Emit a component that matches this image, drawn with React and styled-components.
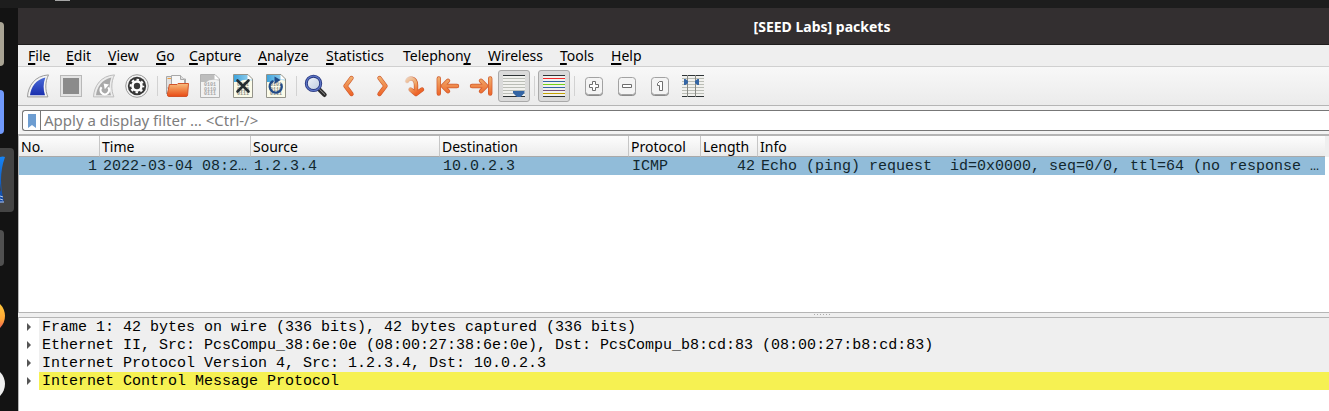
import React from "react";
import styled, { createGlobalStyle } from "styled-components";

const UI = `"Noto Sans", "Open Sans", sans-serif`;
const MONO = `"Liberation Mono", monospace`;

const GlobalStyle = createGlobalStyle`
  *, *::before, *::after { box-sizing: border-box; }
  html, body, #root { height: 100%; }
  body { margin: 0; background: #1d1d1d; font: 14px/20px ${UI}; color: #000; overflow: hidden; }
`;

const Desktop = styled.div`
  display: flex;
  flex-direction: column;
  height: 100%;
`;
const TopPanel = styled.div`
  flex: none;
  height: 8px;
  padding-left: 55px;
  background: #1d1d1d;
`;
const PanelMark = styled.div`
  width: 15px;
  height: 1px;
  background: #a5a5a5;
`;
const Workspace = styled.div`
  flex: 1;
  display: flex;
  min-height: 0;
`;
const Dock = styled.nav`
  flex: none;
  width: 18px;
  padding-top: 2px;
  background: #131313;
  overflow: hidden;
`;
const DockSlot = styled.div`
  display: flex;
  align-items: center;
  height: 68px;
  svg { display: block; }
`;
const Window = styled.main`
  flex: 1;
  min-width: 0;
  display: flex;
  flex-direction: column;
  background: #efefef;
`;
const TitleBar = styled.h1`
  flex: none;
  height: 37px;
  margin: 0;
  padding-left: 297px;
  border-bottom: 1px solid #1f1d1d;
  background: #332f30;
  color: #fff;
  font-size: 14px;
  line-height: 38px;
  font-weight: 700;
  text-align: center;
`;
const MenuBar = styled.nav`
  flex: none;
  display: flex;
  gap: 15px;
  height: 22px;
  padding-left: 10px;
  border-bottom: 1px solid #d0d0d0;
`;
const MenuItem = styled.button`
  width: ${(p) => p.$width}px;
  padding: 0;
  border: 0;
  background: none;
  font: inherit;
  line-height: 21px;
  text-align: left;
  white-space: nowrap;
  color: #000;
  u {
    text-decoration-thickness: 2px;
    text-underline-offset: 2px;
    text-decoration-skip-ink: none;
  }
`;
const ToolBar = styled.div`
  flex: none;
  display: flex;
  align-items: center;
  gap: 1px;
  height: 39px;
  padding-left: 4px;
  border-bottom: 1px solid #b5b5b5;
  background: linear-gradient(#f8f8f8, #ebebeb);
`;
const ToolButton = styled.button`
  display: flex;
  align-items: center;
  justify-content: center;
  width: 32px;
  height: 32px;
  padding: 0;
  border: 1px solid ${(p) => (p.$checked ? "#a9a9a9" : "transparent")};
  border-radius: 3px;
  background: ${(p) => (p.$checked ? "#dadada" : "none")};
`;
const Separator = styled.div`
  width: 6px;
  height: 20px;
  padding-left: 3px;
  &::before {
    content: "";
    display: block;
    width: 1px;
    height: 100%;
    background: #d2d2d2;
  }
`;
const FilterBar = styled.div`
  flex: none;
  display: flex;
  padding: 4px 0 3px 4px;
  background: #f3f3f3;
`;
const FilterField = styled.div`
  flex: 1;
  display: flex;
  height: 21px;
  border: 1px solid #777;
  border-right: 0;
  border-radius: 3px 0 0 3px;
  background: #fff;
`;
const BookmarkButton = styled.button`
  display: flex;
  align-items: center;
  justify-content: center;
  width: 18px;
  padding: 0;
  border: 0;
  border-right: 1px solid #777;
  background: none;
`;
const FilterInput = styled.input`
  flex: 1;
  min-width: 0;
  padding: 0 3px;
  border: 0;
  outline: 0;
  background: none;
  font: 15px/19px ${UI};
  &::placeholder { color: #7d7d7d; opacity: 1; }
`;
const PacketPane = styled.section`
  flex: none;
  height: 179px;
  border: solid #b5b5b5;
  border-width: 2px 0 1px 1px;
  background: linear-gradient(#efefef 21px, #fff 21px);
`;
const PacketTable = styled.table`
  width: calc(100% - 4px);
  table-layout: fixed;
  border-collapse: separate;
  border-spacing: 0;
`;
const Heading = styled.th`
  height: 21px;
  padding: 1px 0 0 2px;
  border-right: ${(p) => (p.$last ? "0" : "1px solid #c6c6c6")};
  border-bottom: 1px solid #a9a9a9;
  background: linear-gradient(#fdfdfd, #ebebeb);
  font-weight: 400;
  line-height: 19px;
  text-align: left;
  white-space: nowrap;
`;
const Cell = styled.td`
  height: 18px;
  padding: 1px 3px 0;
  background: #91bcd9;
  font: 15px/17px ${MONO};
  color: #12272e;
  text-align: ${(p) => (p.$numeric ? "right" : "left")};
  white-space: pre;
  overflow: hidden;
`;
const Splitter = styled.div`
  flex: none;
  display: flex;
  justify-content: center;
  gap: 2px;
  height: 4px;
  padding: 1px 0 0 297px;
`;
const Grip = styled.span`
  width: 1px;
  height: 1px;
  background: #aaa;
`;
const DetailsPane = styled.section`
  flex: 1;
  min-height: 0;
  border: solid #b5b5b5;
  border-width: 1px 0 0 1px;
  background: #fff;
`;
const DetailRow = styled.div`
  display: flex;
  height: 18px;
`;
const Expander = styled.button`
  display: flex;
  align-items: center;
  width: 20px;
  padding: 0 0 0 7px;
  border: 0;
  background: none;
`;
const DetailText = styled.div`
  flex: 1;
  padding: 1px 0 0 3px;
  background: ${(p) => (p.$selected ? "#f6f152" : "#efefef")};
  font: 15px/17px ${MONO};
  white-space: nowrap;
`;

const Icon = ({ children }) => (
  <svg width="24" height="24" viewBox="0 0 24 24" fill="none" aria-hidden="true">
    {children}
  </svg>
);

const FIN_OUTER = "M1.5 22.9C2 12 9 1.6 22.5 .9C19 8 19 16 21.9 22.9Z";
const FIN_INNER = "M4 21.2C5 13 10 5.2 19.4 3.4C17 9.5 17.2 15.5 19 21.2Z";

const StartIcon = () => (
  <Icon>
    <path d={FIN_OUTER} fill="#f4f4f4" stroke="#9a9a9a" />
    <path d={FIN_INNER} fill="url(#finBlue)" />
  </Icon>
);
const StopIcon = () => (
  <Icon>
    <rect x="1.5" y="1.5" width="21" height="21" fill="#e4e4e4" stroke="#b8b8b8" />
    <rect x="4" y="4" width="16" height="16" fill="#8b8b8b" />
  </Icon>
);
const RestartIcon = () => (
  <Icon>
    <path d={FIN_OUTER} fill="#ececec" stroke="#bcbcbc" />
    <path d={FIN_INNER} fill="#a9a9a9" />
    <path d="M9.6 13.2A4.3 4.3 0 1 0 16.2 13.4" stroke="#fff" strokeWidth="2.2" />
    <path d="M11.6 9.4L17 10.6L12.8 15.2Z" fill="#fff" />
  </Icon>
);
const OptionsIcon = () => (
  <Icon>
    <circle cx="12" cy="12" r="11.3" fill="#f4f4f4" stroke="#9b9b9b" />
    <circle cx="12" cy="12" r="9.2" fill="#383838" />
    <circle cx="12" cy="12" r="6.3" stroke="#fff" strokeWidth="2" strokeDasharray="2.5 2.45" strokeDashoffset="1.25" />
    <circle cx="12" cy="12" r="4.5" stroke="#fff" strokeWidth="2.6" />
  </Icon>
);
const OpenIcon = () => (
  <Icon>
    <path d="M1.5 20V2.5H7V5H20.5V14H1.5Z" fill="#e2e2e2" stroke="#a8a8a8" />
    <path d="M2.5 4.5H6" stroke="#f0a040" />
    <path d="M6.5 13V1.5H15.5L19.5 5.5V13Z" fill="#f7f7f7" stroke="#a8a8a8" />
    <path d="M15.5 1.5V5.5H19.5" fill="#ddd" stroke="#a8a8a8" />
    <path d="M4.4 10.5H12L13 9.5H23.5L22.6 21Q22.4 22.5 21 22.5H4Q2 22.5 2.4 20Z" fill="url(#folder)" stroke="#d2542a" />
  </Icon>
);
const Page = ({ muted, children }) => (
  <Icon>
    <path d="M2.5 .5H17L21.5 5V23.5H2.5Z" fill={muted ? "#f2f2f2" : "#fbfbe9"} />
    <path d="M3 1H17V5H21V6.5Q12 4.5 8.5 8H3Z" fill={muted ? "#bdbdbd" : "url(#sky)"} />
    <path d="M16.5 .5L21.5 5.5H16.5Z" fill="#fff" />
    <path d="M2.5 .5H17L21.5 5V23.5H2.5Z" stroke={muted ? "#b2b2b2" : "#93938a"} />
    <g fill={muted ? "#a6a6a6" : "#8e8e86"} fontFamily="Liberation Mono, monospace" fontSize="5" fontWeight="700">
      <text x="6" y="12">0101</text>
      <text x="6" y="17">0110</text>
      <text x="6" y="21">0111</text>
    </g>
    {children}
  </Icon>
);
const SaveIcon = () => <Page muted />;
const CloseIcon = () => (
  <Page>
    <path d="M6.5 6.500L17.5 17.5M17.5 6.5L6.5 17.5" stroke="#242d31" strokeWidth="2.6" strokeLinecap="round" />
  </Page>
);
const ReloadIcon = () => (
  <Page>
    <path d="M8.6 7.4A6 6 0 1 0 17.4 10.600" stroke="#214a87" strokeWidth="2.4" strokeLinecap="round" />
    <path d="M10.5 2.6L16.6 6L10.5 10Z" fill="#214a87" />
  </Page>
);
const FindIcon = () => (
  <Icon>
    <path d="M14.8 15L20.5 20.8" stroke="#2b2b2b" strokeWidth="4.4" strokeLinecap="round" />
    <path d="M15 14.8L20.8 20.4" stroke="#9a9a9a" strokeWidth="1" strokeLinecap="round" />
    <circle cx="9.5" cy="9.4" r="7.2" fill="url(#lens)" stroke="#27377f" strokeWidth="3" />
    <circle cx="9.5" cy="9.4" r="7.2" stroke="#5c74c4" strokeWidth="1.3" />
  </Icon>
);
const ArrowStroke = ({ d }) => (
  <Icon>
    <g strokeLinecap="round" strokeLinejoin="round">
      <path d={d} stroke="#cf5a2c" strokeWidth="4.4" />
      <path d={d} stroke="url(#orange)" strokeWidth="3" />
    </g>
  </Icon>
);
const BackIcon = () => <ArrowStroke d="M14.5 4L8.5 12L14.5 20" />;
const ForwardIcon = () => <ArrowStroke d="M9.5 4L15.5 12L9.5 20" />;
const FirstIcon = () => <ArrowStroke d="M2.8 4.5V19.5M21 12H7M12 6.8L6.8 12L12 17.2" />;
const LastIcon = () => <ArrowStroke d="M21.2 4.5V19.5M3 12H17M12 6.8L17.2 12L12 17.2" />;
const GOTO = "M4 7C6 3.5 12.6 3 13 11V19M7.5 15.5L13 20L19 15.5";
const GotoIcon = () => (
  <Icon>
    <g strokeLinecap="round" strokeLinejoin="round">
      <path d={GOTO} stroke="url(#fadeDark)" strokeWidth="4.4" />
      <path d={GOTO} stroke="url(#fadeLight)" strokeWidth="3" />
    </g>
  </Icon>
);
const Lines = ({ colors }) => (
  <>
    <rect x="1" y="1" width="22" height="22" fill="#f1f1ee" />
    {colors.map((c, i) => (
      <rect key={i} x="1" y={1 + i * 3} width="22" height="1" fill={c} />
    ))}
  </>
);
const INK = "#2e3436";
const PALE = "#babdb6";
const PLAIN_LINES = [INK, PALE, PALE, PALE, PALE, PALE, PALE, INK];
const AutoScrollIcon = () => (
  <Icon>
    <Lines colors={PLAIN_LINES} />
    <path d="M11 17H22.500V19L18.6 23H15L11 19Z" fill="#3465a4" />
  </Icon>
);
const ColorizeIcon = () => (
  <Icon>
    <Lines colors={[INK, "#ef2929", "#3465a4", "#73d216", "#3465a4", "#75507b", "#c4a000", INK]} />
  </Icon>
);
const ResizeIcon = () => (
  <Icon>
    <Lines colors={PLAIN_LINES} />
    <path d="M6.5 1V23M14.5 1V23" stroke="#888a85" />
    <path d="M3 5H4.5L7 7V9L4.5 11H3ZM18 5H16.5L14 7V9L16.5 11H18Z" fill="#3465a4" />
  </Icon>
);
const Keycap = ({ children }) => (
  <Icon>
    <rect x="3.5" y="4.5" width="17" height="17" rx="3" fill="#bbb" stroke="#8a8a8a" />
    <rect x="3.5" y="3.5" width="17" height="17" rx="3" fill="#f4f4f4" stroke="#a2a2a2" />
    <g fill="#fff" stroke="#6e6e6e">{children}</g>
  </Icon>
);
const ZoomInIcon = () => (
  <Keycap><path d="M10.5 7.5H13.5V10.5H16.5V13.5H13.5V16.5H10.5V13.5H7.5V10.5H10.5Z" /></Keycap>
);
const ZoomOutIcon = () => (
  <Keycap><path d="M7.5 10.5H16.5V13.5H7.5Z" /></Keycap>
);
const ZoomResetIcon = () => (
  <Keycap><path d="M11.5 7.5H14.5V16.5H11.5V11.5H9.5V9.5Z" /></Keycap>
);

const Gradients = () => (
  <svg width="0" height="0" aria-hidden="true">
    <defs>
      <linearGradient id="finBlue" x1="0" y1="0" x2="0" y2="1">
        <stop stopColor="#4a6bd8" /><stop offset="1" stopColor="#1a2fae" />
      </linearGradient>
      <linearGradient id="folder" x1="0" y1="0" x2="0" y2="1">
        <stop stopColor="#f6bd80" /><stop offset=".5" stopColor="#f08446" /><stop offset="1" stopColor="#e84a15" />
      </linearGradient>
      <linearGradient id="sky" x1="0" y1="0" x2="1" y2="0">
        <stop stopColor="#3fa4dc" /><stop offset="1" stopColor="#9fd5f0" />
      </linearGradient>
      <linearGradient id="lens" x1="0" y1="0" x2="1" y2="1">
        <stop stopColor="#f4f7fb" /><stop offset="1" stopColor="#b9c8de" />
      </linearGradient>
      <linearGradient id="orange" gradientUnits="userSpaceOnUse" x1="0" y1="3" x2="0" y2="21">
        <stop stopColor="#f0b070" /><stop offset="1" stopColor="#ee6428" />
      </linearGradient>
      <linearGradient id="fadeDark" gradientUnits="userSpaceOnUse" x1="2" y1="8" x2="12" y2="10">
        <stop stopColor="#d9a080" stopOpacity=".3" /><stop offset="1" stopColor="#cf5a2c" />
      </linearGradient>
      <linearGradient id="fadeLight" gradientUnits="userSpaceOnUse" x1="2" y1="5" x2="13" y2="20">
        <stop stopColor="#eed0b8" /><stop offset=".5" stopColor="#f0a868" /><stop offset="1" stopColor="#ee6428" />
      </linearGradient>
      <linearGradient id="fox" x1="0" y1="0" x2="0" y2="1">
        <stop stopColor="#ffd43c" /><stop offset=".6" stopColor="#ffa436" /><stop offset="1" stopColor="#e5406a" />
      </linearGradient>
      <linearGradient id="shark" x1="0" y1="0" x2="0" y2="1">
        <stop stopColor="#1684f5" /><stop offset="1" stopColor="#12459f" />
      </linearGradient>
    </defs>
  </svg>
);

const Bookmark = () => (
  <svg width="8" height="14" viewBox="0 0 8 14" aria-hidden="true">
    <path d="M0 0H8V14L4 11L0 14Z" fill="#6d9dd1" />
  </svg>
);
const Triangle = () => (
  <svg width="6" height="8" viewBox="0 0 6 8" aria-hidden="true">
    <path d="M1 0L5 4L1 8Z" fill="#555" />
  </svg>
);

const DOCK = [
  <rect x="-10" y="12" width="14" height="44" rx="4" fill="#a9a494" />,
  <rect x="-10" y="12" width="14" height="44" rx="4" fill="#7099fb" />,
  <>
    <rect x="-10" y="2" width="24" height="64" rx="4" fill="#444" />
    <path d="M0 11Q3 10 5 11Q1 22 1 34Q1 44 4 56L0 57Z" fill="url(#shark)" />
    <path d="M0 24Q-1 34 1 44L0 46Z" fill="#444" />
    <path d="M0 50L3 51M0 53L3 54M0 56L4 56" stroke="#b9c9e6" />
  </>,
  <rect x="-10" y="16" width="14" height="36" rx="4" fill="#505050" />,
  <circle cx="-12" cy="34" r="17" fill="url(#fox)" />,
  <circle cx="-12" cy="34" r="17" fill="#efefef" />,
];

const MENUS = [
  ["F", "ile", 23], ["E", "dit", 27], ["V", "iew", 33], ["G", "o", 18], ["C", "apture", 54],
  ["A", "nalyze", 53], ["S", "tatistics", 62], ["", "Telephony", 70], ["W", "ireless", 57],
  ["T", "ools", 36], ["H", "elp", 33],
];

const TOOLS = [
  ["Start capture", StartIcon], ["Stop capture", StopIcon], ["Restart capture", RestartIcon], ["Capture options", OptionsIcon],
  null,
  ["Open", OpenIcon], ["Save", SaveIcon], ["Close", CloseIcon], ["Reload", ReloadIcon],
  null,
  ["Find packet", FindIcon], ["Go back", BackIcon], ["Go forward", ForwardIcon], ["Go to packet", GotoIcon],
  ["First packet", FirstIcon], ["Last packet", LastIcon], ["Auto scroll", AutoScrollIcon, true],
  null,
  ["Colorize", ColorizeIcon, true],
  null,
  ["Zoom in", ZoomInIcon], ["Zoom out", ZoomOutIcon], ["Normal size", ZoomResetIcon], ["Resize columns", ResizeIcon],
];

const COLUMNS = [
  ["No.", 81], ["Time", 151], ["Source", 189], ["Destination", 189], ["Protocol", 72], ["Length", 57], ["Info"],
];

const DETAILS = [
  "Frame 1: 42 bytes on wire (336 bits), 42 bytes captured (336 bits)",
  "Ethernet II, Src: PcsCompu_38:6e:0e (08:00:27:38:6e:0e), Dst: PcsCompu_b8:cd:83 (08:00:27:b8:cd:83)",
  "Internet Protocol Version 4, Src: 1.2.3.4, Dst: 10.0.2.3",
  "Internet Control Message Protocol",
];

export default function App() {
  return (
    <Desktop>
      <GlobalStyle />
      <TopPanel><PanelMark /></TopPanel>
      <Workspace>
        <Dock aria-label="Dock">
          {DOCK.map((art, i) => (
            <DockSlot key={i}>
              <svg width="18" height="68" viewBox="0 0 18 68" aria-hidden="true">{art}</svg>
            </DockSlot>
          ))}
          <Gradients />
        </Dock>
        <Window>
          <TitleBar>[SEED Labs] packets</TitleBar>
          <MenuBar aria-label="Menu">
            {MENUS.map(([key, rest, width]) => (
              <MenuItem key={rest} type="button" $width={width}>
                {key && <u>{key}</u>}{rest === "Telephony" ? <>Telephon<u>y</u></> : rest}
              </MenuItem>
            ))}
          </MenuBar>
          <ToolBar role="toolbar">
            {TOOLS.map((tool, i) => {
              if (!tool) return <Separator key={i} />;
              const [label, Glyph, checked] = tool;
              return (
                <ToolButton key={i} type="button" aria-label={label} $checked={checked}>
                  <Glyph />
                </ToolButton>
              );
            })}
          </ToolBar>
          <FilterBar>
            <FilterField>
              <BookmarkButton type="button" aria-label="Filter bookmarks"><Bookmark /></BookmarkButton>
              <FilterInput aria-label="Display filter" placeholder="Apply a display filter … <Ctrl-/>" />
            </FilterField>
          </FilterBar>
          <PacketPane>
            <PacketTable>
              <colgroup>
                {COLUMNS.map(([name, width]) => <col key={name} width={width} />)}
              </colgroup>
              <thead>
                <tr>
                  {COLUMNS.map(([name]) => (
                    <Heading key={name} scope="col" $last={name === "Info"}>{name}</Heading>
                  ))}
                </tr>
              </thead>
              <tbody>
                <tr>
                  <Cell $numeric>1</Cell>
                  <Cell>2022-03-04 08:2…</Cell>
                  <Cell>1.2.3.4</Cell>
                  <Cell>10.0.2.3</Cell>
                  <Cell>ICMP</Cell>
                  <Cell $numeric>42</Cell>
                  <Cell>{"Echo (ping) request  id=0x0000, seq=0/0, ttl=64 (no response …"}</Cell>
                </tr>
              </tbody>
            </PacketTable>
          </PacketPane>
          <Splitter>
            {[0, 1, 2, 3, 4, 5].map((i) => <Grip key={i} />)}
          </Splitter>
          <DetailsPane>
            {DETAILS.map((line, i) => (
              <DetailRow key={line}>
                <Expander type="button" aria-label="Expand"><Triangle /></Expander>
                <DetailText $selected={i === 3}>{line}</DetailText>
              </DetailRow>
            ))}
          </DetailsPane>
        </Window>
      </Workspace>
    </Desktop>
  );
}
